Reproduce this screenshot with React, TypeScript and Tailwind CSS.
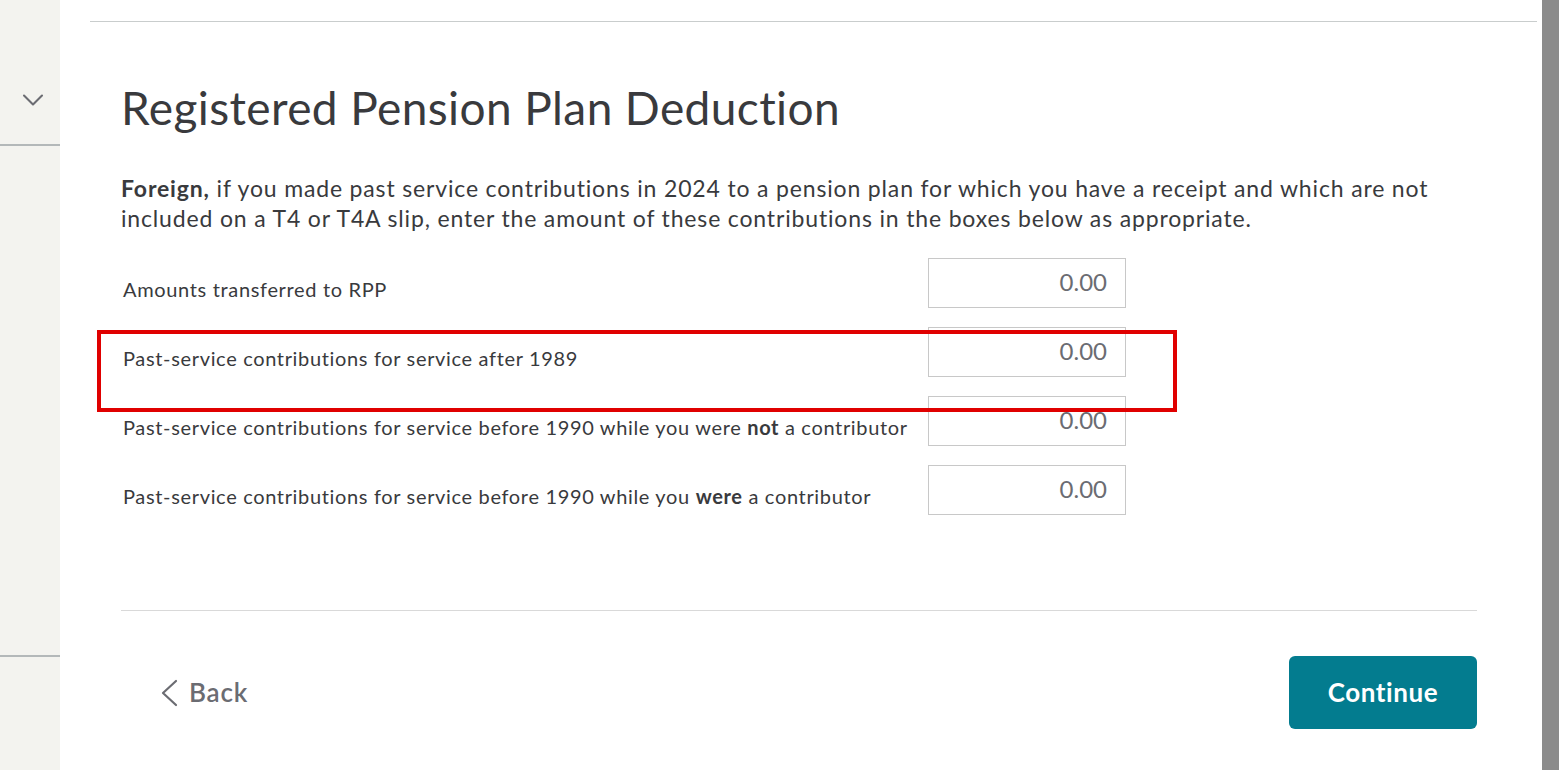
import { ChevronDown } from "lucide-react";

const rows = [
  { id: "rpp", label: <>Amounts transferred to RPP</> },
  { id: "after1989", label: <>Past-service contributions for service after 1989</> },
  {
    id: "notContrib",
    label: (
      <>
        Past-service contributions for service before 1990 while you were <b className="font-bold">not</b> a contributor
      </>
    ),
  },
  {
    id: "contrib",
    label: (
      <>
        Past-service contributions for service before 1990 while you <b className="font-bold">were</b> a contributor
      </>
    ),
  },
];

export default function App() {
  return (
    <div className="flex h-[770px] w-full overflow-hidden bg-white font-['Lato','Open_Sans',sans-serif] text-[#393a3d]">
      {/* Left rail */}
      <aside className="flex w-[60px] shrink-0 flex-col bg-[#f3f3ef]">
        <div className="flex h-[146px] items-start justify-center border-b-2 border-[#b3b8b9] pl-[6px] pt-[82px]">
          <ChevronDown className="h-9 w-9 text-[#6b6c72]" strokeWidth={1.4} />
        </div>
        <div className="h-[511px] border-b-2 border-[#b3b8b9]" />
      </aside>

      {/* Main column */}
      <main className="relative flex flex-1 flex-col pt-[21px]">
        <div className="ml-[30px] mr-[5px] border-t border-[#c9cdcd]" />

        <div className="flex flex-1 flex-col pl-[61px] pr-[65px]">
          <h1 className="mt-[58px] text-[46px] font-normal leading-[55px] tracking-[0.4px]">
            Registered Pension Plan Deduction
          </h1>

          <p className="mt-[38px] text-[23px] leading-[30px] tracking-[0.84px]">
            <b className="font-bold">Foreign,</b> if you made past service contributions in 2024 to a pension plan for which you
            have a receipt and which are not
            <br />
            included on a T4 or T4A slip, enter the amount of these contributions in the boxes below as appropriate.
          </p>

          <div className="mt-[25px] flex flex-col gap-[19px]">
            {rows.map((row) => (
              <div key={row.id} className="flex">
                <label className="w-[807px] shrink-0 pl-[2px] pt-[18px] text-[20px] leading-[26px] tracking-[0.66px]">
                  {row.label}
                </label>
                <input
                  readOnly
                  placeholder="0.00"
                  className="h-[50px] w-[198px] border border-[#c8c8c8] bg-white pb-[3px] pr-[18px] text-right text-[24px] text-[#6b6c72] outline-none placeholder:text-[#6b6c72]"
                />
              </div>
            ))}
          </div>

          <div className="mt-[95px] border-t border-[#d9d9d9]" />

          <div className="mt-[45px] flex items-center justify-between">
            <button className="ml-[39px] flex items-center gap-[11px] text-[26px] font-semibold tracking-[0.8px] text-[#6b6c72]">
              <svg width="18" height="28" viewBox="0 0 18 28" fill="none" stroke="currentColor" strokeWidth="2.2" strokeLinecap="round" strokeLinejoin="round">
                <path d="M16 2 L3 14 L16 26" />
              </svg>
              Back
            </button>
            <button className="flex h-[73px] w-[188px] items-center justify-center rounded-[6px] bg-[#037c8f] text-[26px] font-bold tracking-[0.6px] text-white">
              Continue
            </button>
          </div>
        </div>

        {/* Highlight annotation */}
        <div className="pointer-events-none absolute left-[37px] top-[330px] h-[82px] w-[1080px] border-4 border-[#e00000]" />
      </main>

      {/* Scrollbar */}
      <div className="w-[17px] shrink-0 bg-[#8b8b8b]" />
    </div>
  );
}
